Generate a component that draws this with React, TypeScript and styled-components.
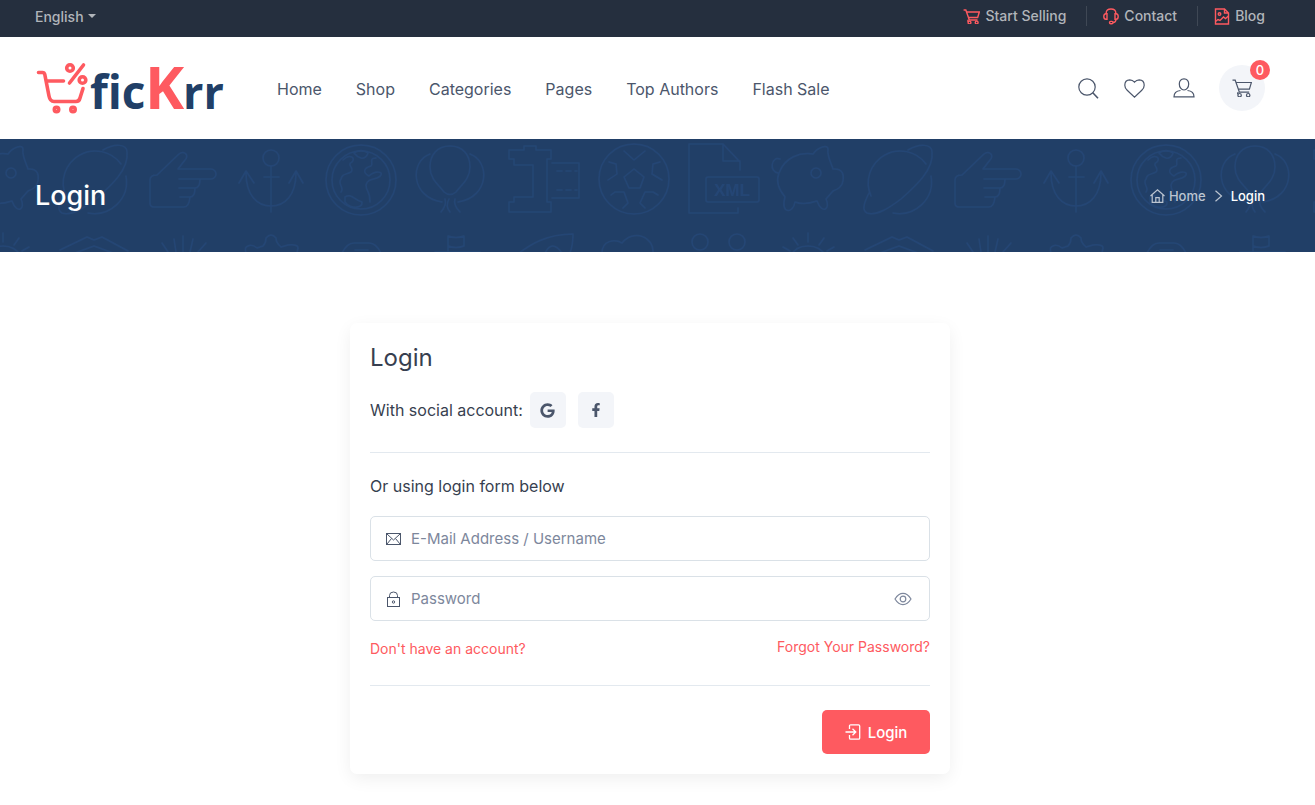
import React, { useState } from 'react';
import styled, { createGlobalStyle } from 'styled-components';
import { FaGoogle, FaFacebookF } from 'react-icons/fa';

const red = '#fe5a60';
const navy = '#213f67';
const slate = '#4b566b';
const ink = '#373f50';
const doodle = '#244675';

const GlobalStyle = createGlobalStyle`
  *, *::before, *::after { box-sizing: border-box; }
  body {
    margin: 0;
    background: #fff;
    color: ${ink};
    font-family: Inter, 'Liberation Sans', sans-serif;
    font-size: 16px;
    line-height: 24px;
  }
  a { text-decoration: none; color: inherit; }
  h1, h2, p { margin: 0; font-weight: 400; }
  button, input, select { font-family: inherit; }
  svg { flex: none; display: block; }
`;

const Bar = styled.div`
  display: flex;
  align-items: center;
  justify-content: space-between;
  padding: 0 50px 0 35px;
`;

const TopBar = styled(Bar)`
  height: 37px;
  padding-bottom: 5px;
  background: #252f3e;
  color: #b1b5ba;
  font-size: 14px;
  font-weight: 500;
`;

const LanguagePicker = styled.label`
  display: flex;
  align-items: center;
  gap: 4px;
`;

const LanguageSelect = styled.select`
  appearance: none;
  border: 0;
  padding: 0;
  background: transparent;
  color: inherit;
  font-size: 14px;
  font-weight: 500;
`;

const TopLinks = styled.nav`
  display: flex;
  align-items: center;
`;

const TopLink = styled.a`
  display: flex;
  align-items: center;
  gap: 5px;
  height: 20px;
  svg { color: ${red}; }
  & + & {
    margin-left: 20px;
    padding-left: 16px;
    border-left: 1px solid #3f4855;
  }
`;

const Header = styled(Bar).attrs({ as: 'header' })`
  height: 102px;
  background: #fff;
`;

const Brand = styled.a`
  display: flex;
  align-items: center;
  width: 188px;
  margin-right: 54px;
`;

const Menu = styled.nav`
  display: flex;
  flex: 1;
  gap: 34px;
  padding-top: 2px;
  color: ${slate};
  white-space: nowrap;
`;

const Tools = styled.div`
  display: flex;
  align-items: center;
  gap: 28px;
  color: ${slate};
`;

const ToolPair = styled.div`
  display: flex;
  align-items: center;
  gap: 24px;
`;

const Tool = styled.button`
  display: grid;
  place-items: center;
  width: 22px;
  height: 24px;
  padding: 0;
  border: 0;
  background: none;
  color: inherit;
`;

const CartButton = styled(Tool)`
  position: relative;
  width: 46px;
  height: 46px;
  border-radius: 50%;
  background: #f3f5f9;
`;

const Badge = styled.span`
  position: absolute;
  top: -5px;
  right: -5px;
  width: 20px;
  height: 20px;
  border-radius: 50%;
  background: ${red};
  color: #fff;
  font-size: 13px;
  font-weight: 500;
  line-height: 20px;
`;

const Banner = styled.section`
  position: relative;
  overflow: hidden;
  background: ${navy};
  color: #fff;
`;

const BannerArt = styled.svg`
  position: absolute;
  inset: 0;
  width: 100%;
  height: 100%;
`;

const BannerRow = styled(Bar)`
  position: relative;
  height: 113px;
`;

const PageTitle = styled.h1`
  && { font-weight: 500; }
  font-size: 27px;
  line-height: 36px;
`;

const Crumbs = styled.nav`
  display: flex;
  align-items: center;
  gap: 8px;
  padding-top: 1px;
  font-size: 13px;
  font-weight: 500;
`;

const CrumbLink = styled.a`
  display: flex;
  align-items: center;
  gap: 4px;
  color: #bcc5d1;
`;

const Main = styled.main`
  display: flex;
  justify-content: center;
  padding: 71px 15px 31px 0;
`;

const Card = styled.form`
  width: 600px;
  max-width: 100%;
  padding: 20px;
  border-radius: 7px;
  background: #fff;
  box-shadow: 0 5px 18px -1px rgba(0, 0, 0, 0.07);
`;

const CardTitle = styled.h2`
  font-size: 24px;
  line-height: 30px;
`;

const SocialRow = styled.div`
  display: flex;
  align-items: center;
  gap: 7px;
  margin-top: 19px;
`;

const SocialButtons = styled.div`
  display: flex;
  gap: 12px;
`;

const SocialButton = styled.button`
  display: grid;
  place-items: center;
  width: 36px;
  height: 36px;
  padding: 0;
  border: 0;
  border-radius: 5px;
  background: #f3f5f9;
  color: ${slate};
`;

const Rule = styled.hr`
  height: 1px;
  margin: 24px 0 0;
  border: 0;
  background: #e3e9ef;
`;

const Hint = styled.p`
  margin: 21px 0 18px;
`;

const Field = styled.label`
  display: flex;
  align-items: center;
  gap: 8px;
  height: 45px;
  padding: 0 17px 0 14px;
  border: 1px solid #dae1e7;
  border-radius: 5px;
  color: ${slate};
  & + & { margin-top: 15px; }
`;

const TextInput = styled.input`
  flex: 1;
  min-width: 0;
  padding: 0;
  border: 0;
  outline: 0;
  background: transparent;
  color: ${slate};
  font-size: 15px;
  &::placeholder { color: #7d879c; opacity: 1; }
`;

const RevealButton = styled.button`
  padding: 0;
  border: 0;
  background: none;
  color: #7d879c;
`;

const LinkRow = styled.div`
  display: flex;
  justify-content: space-between;
  padding: 15px 0 1px;
  color: ${red};
  font-size: 14px;
  line-height: 22px;
`;

const LoweredLink = styled.a`
  padding-top: 2px;
`;

const Actions = styled.div`
  display: flex;
  justify-content: flex-end;
  margin-top: 24px;
`;

const SubmitButton = styled.button`
  display: flex;
  align-items: center;
  justify-content: center;
  gap: 7px;
  width: 108px;
  height: 44px;
  padding: 0;
  border: 0;
  border-radius: 5px;
  background: ${red};
  color: #fff;
  font-size: 15px;
  font-weight: 500;
`;

type IconProps = {
  w: number;
  h: number;
  box?: string;
  stroke?: number;
  children: React.ReactNode;
};

const Icon = ({ w, h, box, stroke = 1.2, children }: IconProps) => (
  <svg
    width={w}
    height={h}
    viewBox={box ?? `0 0 ${w} ${h}`}
    fill="none"
    stroke="currentColor"
    strokeWidth={stroke}
    aria-hidden="true"
  >
    {children}
  </svg>
);

const CartShape = () => (
  <>
    <path d="M.5 1.2H3.2L7.4 13.2H17.2" />
    <path d="M4 3.5H19.4L17.4 10.2H6.4" />
    <path d="M6.6 13.2C5.3 13.6 5.3 15 6.3 15.2" />
    <circle cx="7.6" cy="16.2" r="1.7" />
    <circle cx="16.2" cy="16.2" r="1.7" />
  </>
);

const Logo = () => (
  <svg width="192" height="96" viewBox="0 -21 192 96" role="img" aria-label="ficKrr">
    <g fill="none" stroke={red} strokeWidth="3.600" strokeLinecap="round" strokeLinejoin="round">
      <path d="M3.500 11.500H7.500Q9.300 11.500 9.800 13.500L14 35Q15 40.500 19 40.500H41Q44.200 40.500 45 37L48 27.500" />
      <path d="M12 20H28.500M34.500 22L48.500 4" />
      <circle cx="35" cy="7" r="3.300" />
      <circle cx="47.500" cy="19" r="3.300" />
      <circle cx="21.500" cy="48.500" r="2.200" />
      <circle cx="38" cy="48.500" r="2.200" />
    </g>
    <g fontFamily="'Open Sans', sans-serif" fontWeight="700" fill={navy}>
      <text x="55" y="48" fontSize="46">fic</text>
      <text x="110" y="48" fontSize="59" fill={red}>K</text>
      <text x="148" y="48" fontSize="45">rr</text>
    </g>
  </svg>
);

const BannerPattern = () => (
  <BannerArt aria-hidden="true">
    <defs>
      <pattern id="doodles" x="50" y="0" width="805" height="226" patternUnits="userSpaceOnUse">
        <g transform="translate(-50 0)">
          <g fill="none" stroke={doodle} strokeWidth="1.500" strokeLinecap="round" strokeLinejoin="round">
            {/* planet */}
            <path d="M66 57A32 32 0 0 1 121 25M126 37C130 60 110 78 88 74" />
            <path d="M103 11C115 4 127 5 127 13C129 30 112 46 96 60C84 69 72 77 62 74C56 71 60 62 64 54" />
            {/* pointing hand */}
            <path d="M154 68Q150 68 150 64V41Q150 36 157 36L179 15Q183 12 186 15Q188 18 185 21L178 30H211A5 5 0 0 1 211 40H179M200 40Q200 49 195 49H179M195 49Q195 58 190 58H180M190 58Q189 68 184 68H154" />
            {/* anchor */}
            <circle cx="271" cy="19" r="8" />
            <path d="M271 27V73M264 38H279M246 34C246 56 257 67 271 67C285 67 296 56 296 34M239 44L246 32L254 44M289 44L296 32L303 44" />
            {/* globe */}
            <circle cx="361" cy="41" r="35" />
            <circle cx="361" cy="41" r="29" />
            <path d="M343 21C350 14 356 19 352 23C346 26 355 29 351 33C345 36 342 35 341 40C337 45 345 49 341 53M354 14Q361 9 368 14Q366 20 361 19Q357 18 354 14M376 19C368 19 374 25 371 27C363 29 363 34 369 37C376 31 383 33 381 36C377 42 368 38 366 46C366 53 370 51 370 63M345 58C352 54 354 61 362 63C363 70 350 70 345 63Z" />
            {/* balloons */}
            <path d="M450 7C463 7 470 16 470 28C470 40 461 46 456 53Q450 58 444 53C439 46 430 40 430 28C430 16 437 7 450 7M470 15C490 22 490 58 458 63M430 15C410 22 410 58 442 63M445 60Q447 66 441 73M449 60Q445 67 450 73M455 60Q453 66 460 73" />
            {/* film roll */}
            <path d="M509 11H524V7H536V11H551V20H547V63H551V73H509V63H514V58H533V26H514V20H509ZM552 24H579V59H552" />
            <path d="M557 32H577M557 51H577" strokeDasharray="5 4" />
            {/* football */}
            <circle cx="634" cy="40" r="35" />
            <path d="M634 30L644 38L640 49H629L624 38ZM624 12L634 21L645 12M609 23L616 25L617 35L608 41M660 23L653 25L652 35L662 41M611 56L615 53H624L628 64L623 69M658 56L653 53H645L640 64L645 69" />
            {/* xml document */}
            <path d="M740 31V23L723 5H689V74H738V69M723 5V22H740" />
            <rect x="706" y="38" width="53" height="25" rx="2" />
            {/* piggy bank */}
            <path d="M779 34C785 18 800 13 813 15C818 8 828 5 828 10C827 17 830 21 833 30C843 29 844 36 843 42C842 48 838 50 833 52L826 60C831 70 822 76 817 62C808 65 800 65 795 63C793 75 780 75 785 58C780 52 775 44 779 34M780 20C771 17 769 33 778 34" />
            <circle cx="816" cy="34" r="5" />
            {/* second row: mountain, burst, gear, pill, flag, rocket, cloud, dots, sun */}
            <path d="M60 111L87 98L94 101L102 98L128 112M75 114L94 107L113 114" />
            <path d="M162 104L168 113M174 100L176 113M183 97V113M193 100L190 113M206 104L198 113" />
            <path d="M246 114Q244 108 248 107Q252 105 257 109L263 107Q266 104 266 99Q271 93 276 99Q276 104 281 108L288 106Q298 105 298 109L297 114" />
            <path d="M342 114Q347 104 354 104H369Q376 104 381 114M355 111H368" />
            <path d="M448 114V97Q456 100 464 97V107Q456 110 448 107M435 113H480" />
            <path d="M519 114C530 106 546 95 573 95Q573 106 570 114M545 114Q552 100 562 114" />
            <path d="M602 114C602 101 615 100 622 104C633 90 654 97 653 114" />
            <circle cx="700" cy="103" r="8" />
            <circle cx="737" cy="103" r="8" />
            <path d="M791 117Q795 107 808 107Q820 107 826 117M808 94V103M793 99L798 106M824 99L819 106M783 108L790 112M834 108L827 112" />
          </g>
          <text x="714" y="57" fontFamily="'Liberation Sans', sans-serif" fontWeight="700" fontSize="17" fill={doodle}>XML</text>
        </g>
      </pattern>
    </defs>
    <rect width="100%" height="100%" fill="url(#doodles)" />
  </BannerArt>
);

const menu = ['Home', 'Shop', 'Categories', 'Pages', 'Top Authors', 'Flash Sale'];

export default function App() {
  const [shown, setShown] = useState(false);
  return (
    <>
      <GlobalStyle />
      <TopBar>
        <LanguagePicker>
          <LanguageSelect aria-label="Language">
            <option>English</option>
          </LanguageSelect>
          <Icon w={8} h={4} stroke={0}><path d="M0 0H8L4 4Z" fill="currentColor" /></Icon>
        </LanguagePicker>
        <TopLinks>
          <TopLink href="#sell">
            <Icon w={17} h={15} box="0 0 20 18" stroke={1.7}><CartShape /></Icon>
            Start Selling
          </TopLink>
          <TopLink href="#contact">
            <Icon w={16} h={17} stroke={1.4}>
              <path d="M3.200 6V5Q3.200 1 8 1Q12.800 1 12.800 5V6" />
              <path d="M4 5.700V11.300H3Q.8 11.300.8 8.500Q.8 5.700 3 5.700ZM12 5.700V11.300H13Q15.200 11.300 15.200 8.500Q15.200 5.700 13 5.700Z" />
              <path d="M13 11.500Q12.800 14.500 10 14.500" />
              <rect x="6.500" y="13.400" width="3.500" height="2.400" rx="1.200" />
            </Icon>
            Contact
          </TopLink>
          <TopLink href="#blog">
            <Icon w={16} h={17} stroke={1.4}>
              <path d="M10.500 1H1.500V16H14.500V5ZM10.500 1V5H14.500" />
              <circle cx="5.500" cy="6" r="1.300" />
              <path d="M1.500 13.500L4 11.500L6 12.500L9.500 9L11.500 10.500L14.500 8" />
            </Icon>
            Blog
          </TopLink>
        </TopLinks>
      </TopBar>

      <Header>
        <Brand href="#home"><Logo /></Brand>
        <Menu>
          {menu.map((item) => <a key={item} href={`#${item}`}>{item}</a>)}
        </Menu>
        <Tools>
          <ToolPair>
            <Tool aria-label="Search">
              <Icon w={21} h={21}><circle cx="9" cy="9" r="8.200" /><path d="M14.800 14.800L20 20.200" strokeWidth="1.600" /></Icon>
            </Tool>
            <Tool aria-label="Wishlist">
              <Icon w={21} h={19}><path d="M10.500 3.200Q8.500.8 5.800.8Q.8 1 .8 6.200Q.8 9 3.200 11.300L10.500 18.100L17.800 11.300Q20.200 9 20.200 6.200Q20.200 1 15.200.8Q12.500.8 10.500 3.200Z" /></Icon>
            </Tool>
          </ToolPair>
          <ToolPair>
            <Tool aria-label="Account">
              <Icon w={22} h={20}>
                <path d="M11 .8C7.800.8 6.300 3 6.300 6C6.300 9.300 8.300 12 11 12C13.700 12 15.700 9.300 15.700 6C15.700 3 14.200.8 11 .8Z" />
                <path d="M7.500 12.500Q1 13 1 18.800H21Q21 13 14.500 12.500" />
              </Icon>
            </Tool>
            <CartButton aria-label="Cart">
              <Icon w={20} h={18}><CartShape /></Icon>
              <Badge>0</Badge>
            </CartButton>
          </ToolPair>
        </Tools>
      </Header>

      <Banner>
        <BannerPattern />
        <BannerRow>
          <PageTitle>Login</PageTitle>
          <Crumbs aria-label="Breadcrumb">
            <CrumbLink href="#home">
              <Icon w={15} h={14}>
                <path d="M.5 7L7.500.8L14.500 7M2.200 5.800V13.300H12.800V5.800" />
                <path d="M5.800 13V8.700H9.200V13" />
              </Icon>
              Home
            </CrumbLink>
            <Icon w={9} h={12}><path d="M1.500.8L7.500 6L1.500 11.200" stroke="#bcc5d1" /></Icon>
            <span>Login</span>
          </Crumbs>
        </BannerRow>
      </Banner>

      <Main>
        <Card onSubmit={(e) => e.preventDefault()}>
          <CardTitle>Login</CardTitle>
          <SocialRow>
            <span>With social account:</span>
            <SocialButtons>
              <SocialButton type="button" aria-label="Google"><FaGoogle size={15} /></SocialButton>
              <SocialButton type="button" aria-label="Facebook"><FaFacebookF size={14} /></SocialButton>
            </SocialButtons>
          </SocialRow>
          <Rule />
          <Hint>Or using login form below</Hint>
          <Field>
            <Icon w={18} h={16} stroke={1}>
              <rect x="1.500" y="2.500" width="14" height="11" />
              <path d="M2 3L8.500 9L15 3M2 13L6.500 7.500M15 13L10.500 7.500" />
            </Icon>
            <TextInput type="text" aria-label="E-Mail Address or Username" placeholder="E-Mail Address / Username" />
          </Field>
          <Field>
            <Icon w={18} h={18} stroke={1}>
              <rect x="2.500" y="7.500" width="12" height="9" />
              <path d="M4.500 7.500V5.500Q4.500 2 8.500 2Q12.500 2 12.500 5.500V7.500" />
              <circle cx="8.500" cy="12" r="1.200" />
            </Icon>
            <TextInput type={shown ? 'text' : 'password'} aria-label="Password" placeholder="Password" />
            <RevealButton type="button" aria-label="Show password" onClick={() => setShown(!shown)}>
              <Icon w={18} h={14}>
                <path d="M1 7Q4.500 1.300 9 1.300Q13.500 1.300 17 7Q13.500 12.700 9 12.700Q4.500 12.700 1 7Z" />
                <circle cx="9" cy="7" r="2.800" />
              </Icon>
            </RevealButton>
          </Field>
          <LinkRow>
            <LoweredLink href="#register">Don't have an account?</LoweredLink>
            <a href="#forgot">Forgot Your Password?</a>
          </LinkRow>
          <Rule />
          <Actions>
            <SubmitButton type="submit">
              <Icon w={16} h={16} stroke={1.3}>
                <path d="M4.500 5V2Q4.500.8 5.700.8H13.500Q14.700.8 14.700 2V14Q14.700 15.200 13.500 15.200H5.700Q4.500 15.200 4.500 14V11" />
                <path d="M.5 8H10.500M7.500 4.700L10.800 8L7.500 11.300" />
              </Icon>
              Login
            </SubmitButton>
          </Actions>
        </Card>
      </Main>
    </>
  );
}
